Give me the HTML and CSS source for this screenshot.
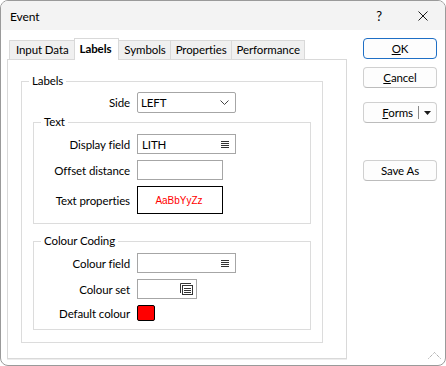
FILE: index.html
```html
<!DOCTYPE html>
<html lang="en">
<head>
    <meta charset="UTF-8">
    <title>Event</title>
    <link rel="stylesheet" href="styles.css">
</head>
<body>

<div class="window">
    <div class="titlebar">
        <span class="title">Event</span>
        <span class="help">?</span>
        <span class="close">
            <svg width="10" height="10" viewBox="0 0 10 10"><path d="M0.5 0.5L9.5 9.5M9.5 0.5L0.5 9.5" stroke="#1a1a1a" stroke-width="1"/></svg>
        </span>
    </div>

    <div class="body">
        <div class="tabs-area">
            <div class="tabs">
                <div class="tab">Input Data</div>
                <div class="tab active">Labels</div>
                <div class="tab">Symbols</div>
                <div class="tab">Properties</div>
                <div class="tab">Performance</div>
            </div>

            <div class="panel">
                <fieldset class="group outer">
                    <legend>Labels</legend>
                    <div class="row side-row">
                        <span class="label">Side</span>
                        <div class="field select">
                            <span>LEFT</span>
                            <svg class="chevron" width="9" height="5" viewBox="0 0 9 5"><path d="M0.5 0.5L4.5 4.5L8.5 0.5" fill="none" stroke="#444" stroke-width="1"/></svg>
                        </div>
                    </div>

                    <fieldset class="group inner text-group">
                        <legend>Text</legend>
                        <div class="row">
                            <span class="label">Display field</span>
                            <div class="field wide">
                                <span>LITH</span>
                                <svg class="list-icon" width="8" height="8" viewBox="0 0 8 8"><path d="M0 1.5H8M0 3.5H8M0 5.5H8M0 7.5H8" stroke="#333" stroke-width="1"/></svg>
                            </div>
                        </div>
                        <div class="row">
                            <span class="label">Offset distance</span>
                            <div class="field short"></div>
                        </div>
                        <div class="row">
                            <span class="label">Text properties</span>
                            <div class="field short font-preview">AaBbYyZz</div>
                        </div>
                    </fieldset>

                    <fieldset class="group inner colour-group">
                        <legend>Colour Coding</legend>
                        <div class="row">
                            <span class="label">Colour field</span>
                            <div class="field wide">
                                <span></span>
                                <svg class="list-icon" width="8" height="8" viewBox="0 0 8 8"><path d="M0 1.5H8M0 3.5H8M0 5.5H8M0 7.5H8" stroke="#333" stroke-width="1"/></svg>
                            </div>
                        </div>
                        <div class="row">
                            <span class="label">Colour set</span>
                            <div class="field tiny">
                                <span></span>
                                <svg class="set-icon" width="13" height="12" viewBox="0 0 13 12">
                                    <path d="M0.5 10V0.5H11" fill="none" stroke="#333"/>
                                    <rect x="2.5" y="2.5" width="10" height="9" fill="none" stroke="#333"/>
                                    <path d="M4 5.5H11M4 7.5H11M4 9.5H11" stroke="#333"/>
                                </svg>
                            </div>
                        </div>
                        <div class="row swatch-row">
                            <span class="label">Default colour</span>
                            <div class="swatch"></div>
                        </div>
                    </fieldset>
                </fieldset>
            </div>
        </div>

        <div class="buttons">
            <div class="btn default"><u>O</u>K</div>
            <div class="btn cancel"><u>C</u>ancel</div>
            <div class="btn forms">
                <span class="forms-text"><u>F</u>orms</span>
                <span class="forms-arrow">
                    <svg width="7" height="4" viewBox="0 0 7 4"><path d="M0 0H7L3.5 4Z" fill="#1a1a1a"/></svg>
                </span>
            </div>
            <div class="btn save">Save As</div>
        </div>
    </div>

    <svg class="grip" width="13" height="7" viewBox="0 0 13 7"><path d="M0.5 6.5L6.5 0.5L12.5 6.5" fill="none" stroke="#8a8a8a" stroke-width="1" stroke-dasharray="1 1"/></svg>
</div>

</body>
</html>
```

FILE: styles.css
```css
body {
    margin: 0;
    padding: 0;
    font-family: Lato, 'Noto Sans', sans-serif;
    font-size: 11.5px;
    letter-spacing: -0.1px;
    color: #000;
    background-color: #fff;
}
.window {
    position: relative;
    box-sizing: border-box;
    width: 446px;
    height: 366px;
    border: 1px solid #9a9a9a;
    border-radius: 8px;
    overflow: hidden;
    background-color: #fff;
}
.titlebar {
    display: flex;
    align-items: center;
    height: 29px;
    padding-left: 9px;
    font-size: 12px;
    background-color: #f3f3f3;
}
.title {
    flex: 1;
    margin-top: 1px;
}
.help {
    font-size: 13px;
    margin-right: 36px;
    margin-top: 1px;
}
.close {
    display: flex;
    margin-right: 17px;
    margin-top: 1px;
}
.body {
    display: flex;
    padding: 8px 0 0 6px;
}
.tabs-area {
    width: 340px;
}
.tabs {
    display: flex;
    align-items: flex-end;
    height: 21px;
    padding-left: 2px;
}
.tab {
    box-sizing: border-box;
    height: 19px;
    line-height: 18px;
    padding: 0 4px 0 5px;
    border: 1px solid #d9d9d9;
    border-bottom: none;
    margin-left: -1px;
    white-space: nowrap;
    background-color: #f0f0f0;
}
.tab:first-child {
    margin-left: 0;
    padding: 0 5px 0 6px;
}
.tab.active {
    position: relative;
    z-index: 1;
    height: 22px;
    line-height: 19px;
    margin-bottom: -1px;
    padding: 0 7px 0 5px;
    font-weight: bold;
    background-color: #fff;
}
.panel {
    box-sizing: border-box;
    height: 300px;
    border: 1px solid #d9d9d9;
    box-shadow: 0 1px 0 #ededed;
    padding: 13px 23px 0 13px;
}
.group {
    margin: 0;
    padding: 0;
    border: 1px solid #dcdcdc;
}
.group legend {
    margin-left: 7px;
    padding: 0 3px;
    line-height: 16px;
}
.outer {
    padding: 3px 0 12px 0;
}
.inner {
    margin: 1px 11px 0 11px;
    padding: 4px 0 9px 0;
}
.colour-group {
    margin-top: 9px;
    padding-bottom: 8px;
}
.row {
    display: flex;
    align-items: center;
    margin-top: 6px;
}
.row:first-of-type {
    margin-top: 0;
}
.label {
    width: 96px;
    margin-right: 7px;
    text-align: right;
    white-space: nowrap;
}
.side-row .label {
    width: 108px;
}
.field {
    box-sizing: border-box;
    display: flex;
    align-items: center;
    justify-content: space-between;
    height: 20px;
    padding: 0 6px 0 4px;
    border: 1px solid #a6a6a6;
    background-color: #fff;
}
.select {
    width: 99px;
    height: 21px;
    padding-left: 3px;
    border-radius: 2px;
}
.wide {
    width: 99px;
}
.short {
    width: 86px;
}
.tiny {
    width: 60px;
    padding-right: 3px;
}
.font-preview {
    height: 28px;
    justify-content: center;
    border: 1px solid #000;
    color: #ff0000;
    font-family: 'Liberation Sans', Arial, sans-serif;
    font-size: 10px;
    letter-spacing: 0;
}
.swatch {
    box-sizing: border-box;
    width: 18px;
    height: 16px;
    border: 1px solid #000;
    border-radius: 2px;
    background-color: #ff0000;
}
.buttons {
    display: flex;
    flex-direction: column;
    margin-left: 16px;
}
.btn {
    box-sizing: border-box;
    display: flex;
    align-items: center;
    justify-content: center;
    width: 74px;
    height: 21px;
    border: 1px solid #d0d0d0;
    border-bottom-color: #bcbcbc;
    border-radius: 4px;
    background-color: #fdfdfd;
}
.btn.default {
    border-color: #1f6fc5;
}
.btn.cancel {
    margin-top: 8px;
}
.btn.forms {
    margin-top: 14px;
    justify-content: flex-end;
}
.forms-text {
    margin-right: 5px;
}
.forms-arrow {
    display: flex;
    align-items: center;
    justify-content: center;
    width: 17px;
    height: 13px;
    border-left: 1px solid #8a8a8a;
}
.btn.save {
    margin-top: 37px;
}
.grip {
    position: absolute;
    right: 4px;
    bottom: 6px;
}
```
